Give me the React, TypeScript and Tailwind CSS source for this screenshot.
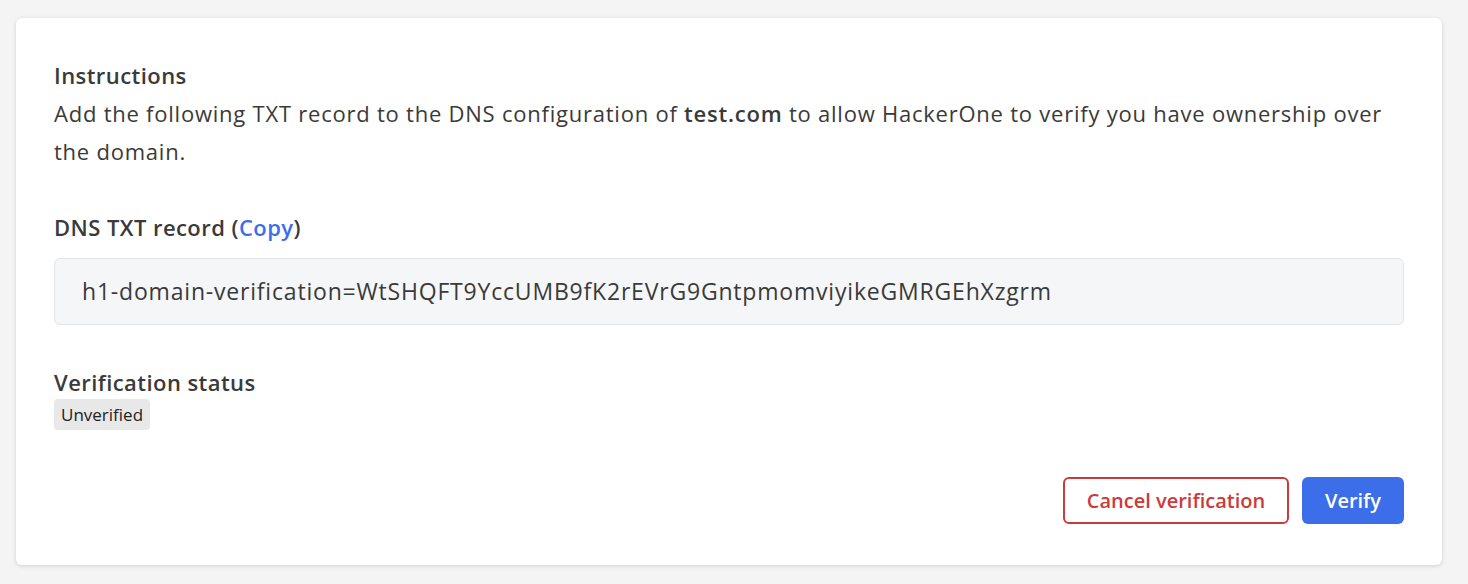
export default function App() {
  return (
    <div className="min-h-[584px] bg-[#f4f4f4] pl-4 pr-[26px] pt-[18px] pb-[18px] font-['Open_Sans',sans-serif] text-[#3a3a3a]">
      <div className="rounded-md bg-white shadow-[0_1px_4px_rgba(0,0,0,0.15)] px-[38px] pt-[42px] pb-[41px]">
        {/* Instructions */}
        <h3 className="text-[22px] font-semibold leading-[30px] tracking-[0.02em]">Instructions</h3>
        <p className="mt-[4px] text-[22px] leading-[38px] tracking-[0.035em]">
          Add the following TXT record to the DNS configuration of <strong className="font-semibold">test.com</strong> to allow HackerOne to verify you have ownership over the domain.
        </p>

        {/* Record */}
        <div className="mt-[42px]">
          <div className="text-[22px] font-semibold leading-[30px] tracking-[0.02em]">
            DNS TXT record (<button type="button" className="text-[#3b6ee8] font-semibold tracking-[0.02em]">Copy</button>)
          </div>
          <div className="mt-[16px] h-[67px] flex items-center rounded-md border border-[#e3e4e6] bg-[#f5f6f7] px-[27px] text-[23px] tracking-[0.035em]">
            h1-domain-verification=WtSHQFT9YccUMB9fK2rEVrG9GntpmomviyikeGMRGEhXzgrm
          </div>
        </div>

        {/* Status */}
        <div className="mt-[42px]">
          <div className="text-[22px] font-semibold leading-[30px] tracking-[0.02em]">Verification status</div>
          <span className="mt-[2px] inline-block rounded bg-[#e8e8e8] px-[7px] py-[4px] text-[17px] leading-[23px] text-[#222]">Unverified</span>
        </div>

        {/* Actions */}
        <div className="mt-[47px] flex justify-end gap-[13px]">
          <button type="button" className="h-[47px] w-[226px] rounded-md border-2 border-[#cc3b3b] bg-white text-[20px] font-semibold text-[#cc3b3b]">
            Cancel verification
          </button>
          <button type="button" className="h-[47px] w-[102px] rounded-md bg-[#3b6ee8] text-[20px] font-semibold text-white">
            Verify
          </button>
        </div>
      </div>
    </div>
  )
}
